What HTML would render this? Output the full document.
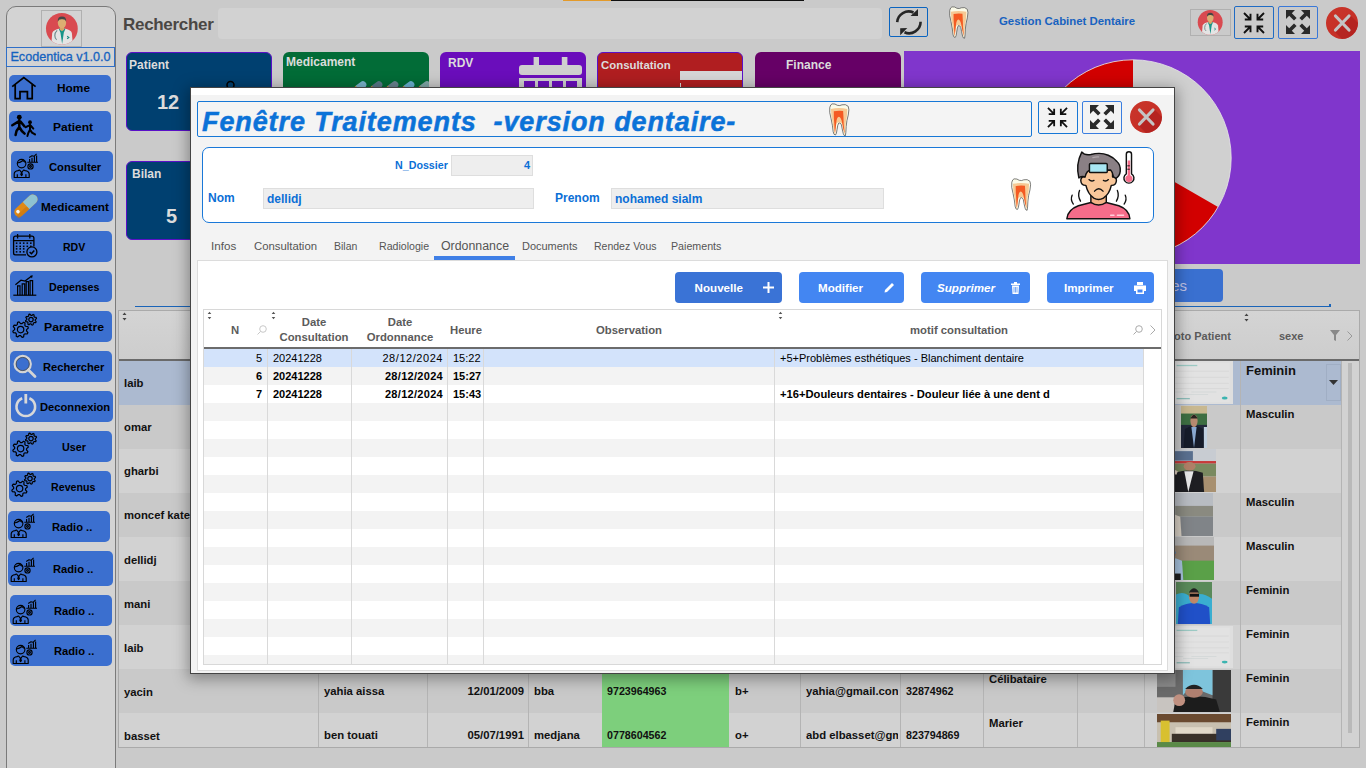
<!DOCTYPE html><html><head><meta charset="utf-8"><style>*{box-sizing:border-box;margin:0;padding:0}
html,body{width:1366px;height:768px;overflow:hidden}
body{background:#cacaca;font-family:"Liberation Sans",sans-serif;position:relative}
.a{position:absolute}
svg{display:block}
#side{left:6px;top:6px;width:110px;height:780px;background:#d3d3d3;border:1.5px solid #7a7a7a;border-radius:10px 10px 0 0}
.sb{position:absolute;background:#3b6fcf;border-radius:5px;color:#000;font-weight:bold;font-size:12px;white-space:nowrap}
.b{font-weight:bold}
.card{position:absolute;border-radius:6px;color:#dcdcdc;font-weight:bold;overflow:hidden}
.bgt{position:absolute;font-weight:bold;font-size:11.3px;color:#111;white-space:nowrap;line-height:14px}
.vl{position:absolute;width:1px;background:#b4b4b4}
.btn{position:absolute;top:272px;height:31px;border-radius:4px}
.hdr{position:absolute;font-weight:bold;font-size:11.3px;color:#5b5b5b;text-align:center;line-height:15px;white-space:nowrap}
.cell{position:absolute;font-size:11px;color:#000;white-space:nowrap;line-height:18px}
.gl{position:absolute;width:1px;background:#d9d9d9}
</style></head><body>
<div class="a" style="left:563px;top:0;width:48px;height:1px;background:#e39a2a"></div>
<div class="a" style="left:611px;top:0;width:193px;height:1px;background:#111"></div>
<div id="side" class="a"></div>
<div class="a" style="left:41px;top:10px;width:41px;height:37px;border:1px solid #b0b0b0;background:#d3d3d3"></div>
<svg class="a" style="left:40.0px;top:8.0px" width="44.0" height="40.0" viewBox="0 0 845 768">
<defs><clipPath id="cca"><circle cx="420" cy="400" r="305"/></clipPath></defs>
<circle cx="420" cy="400" r="305" fill="#d94a50"/>
<g clip-path="url(#cca)">
<path d="M215 720 L235 480 Q255 425 360 400 L490 400 Q595 425 612 480 L632 720 Z" fill="#e4e4e4"/>
<path d="M360 400 L490 400 L458 470 L425 690 L392 470 Z" fill="#189488"/>
<path d="M382 350 H462 V418 L422 445 L382 418Z" fill="#d6a468"/>
<ellipse cx="422" cy="282" rx="80" ry="108" fill="#dcae72"/>
<path d="M342 262 Q332 168 422 165 Q512 168 502 262 Q490 212 422 218 Q360 212 342 262Z" fill="#454545"/>
<path d="M330 430 Q285 470 285 530 Q285 590 320 610" fill="none" stroke="#6a8a8a" stroke-width="22"/>
<path d="M520 540 L555 565 L520 590" fill="none" stroke="#1a8a80" stroke-width="20"/>
</g></svg>
<div class="a" style="left:6px;top:47px;width:109px;height:20px;border:1px solid #2f6fc8;color:#1462c0;font-size:12.6px;line-height:19px;text-align:center;-webkit-text-stroke:0.3px #1462c0">Ecodentica v1.0.0</div>
<div class="sb" style="left:9px;top:75px;width:102px;height:27px">
<div class="a" style="left:0.0px;top:0.0px"><svg width="30" height="28" viewBox="0 0 30 28"><path d="M3.2 11.6 L14.8 2.5 L26.6 11.6 M6.2 9.3 V23.6 H11 V16.6 H18.4 V23.6 H23.2 V9.3" fill="none" stroke="#000" stroke-width="1.75" stroke-linejoin="miter"/></svg></div>
</div>
<div class="a b" style="left:56.6px;top:81.1px;font-size:11.5px;line-height:14px;white-space:nowrap;transform:scaleX(1.033);transform-origin:0 0">Home</div>
<div class="sb" style="left:9px;top:111px;width:102px;height:31px">
<div class="a" style="left:0.0px;top:0.0px"><svg width="30" height="28" viewBox="0 0 30 28"><g fill="#000"><circle cx="10.3" cy="6.2" r="2.4"/><circle cx="21" cy="11.2" r="1.9"/></g><g fill="none" stroke="#000" stroke-linecap="round" stroke-linejoin="round"><path d="M10.3 9 V16 M9.3 10.6 L3.3 14.3 M11.5 10.6 L15.4 15.3 M10.3 16 L7.5 20 L6.6 24 M10.3 16 L12.8 20 L15.6 22.6" stroke-width="2.5"/><path d="M21 13.6 V18.6 M20.4 14.3 L16.8 16.2 M21.6 14.5 L24.3 17.6 M21 18.6 L19.3 22 L18.4 25 M21 18.6 L23 21.6 L26 23.4" stroke-width="2"/></g></svg></div>
</div>
<div class="a b" style="left:53.0px;top:119.8px;font-size:11.5px;line-height:14px;white-space:nowrap;transform:scaleX(1.043);transform-origin:0 0">Patient</div>
<div class="sb" style="left:11px;top:151px;width:102px;height:31px">
<div class="a" style="left:0.0px;top:0.0px"><svg width="30" height="28" viewBox="0 0 30 28"><g fill="none" stroke="#000" stroke-width="1.15" stroke-linejoin="round"><circle cx="10.6" cy="12.6" r="4.3"/><path d="M6.5 12 Q9.5 11.5 12 9.5 Q13.5 11 14.8 11.5"/><path d="M3.2 26.5 V22.8 Q3.5 20 7 19.6 L8.6 19 L10.6 21.6 L12.6 19 L14.2 19.6 Q17.8 20 18.2 22.8 V26.5Z"/><path d="M10.6 21.6 L9.8 23.4 L10.6 24.6 L11.4 23.4Z"/><path d="M6.3 23.2 V26.5 M14.9 23.2 V26.5"/><circle cx="19.5" cy="15.4" r="2.6"/><circle cx="19.5" cy="15.4" r="0.9"/><path d="M16.3 11.2 H27 M18.6 11.2 V8 M21 11.2 V6.8 M23.4 11.2 V5.6 M25.6 11.2 V4.6 M18.2 6.4 L21 4.8 L23 5.3 L25.6 2.8"/></g></svg></div>
</div>
<div class="a b" style="left:48.6px;top:159.8px;font-size:11.5px;line-height:14px;white-space:nowrap;transform:scaleX(0.973);transform-origin:0 0">Consulter</div>
<div class="sb" style="left:11px;top:191px;width:102px;height:31px">
<div class="a" style="left:0.0px;top:0.0px"><svg width="30" height="30" viewBox="0 0 30 30"><g transform="rotate(-42.8 15.05 14.55)"><rect x="0.7" y="9.75" width="28.3" height="9.6" rx="4.8" fill="#e08a16"/><path d="M15.05 9.75 H24.2 A4.8 4.8 0 0 1 24.2 19.35 H15.05Z" fill="#8ec2d2"/><rect x="0.7" y="15.5" width="14.35" height="3.85" rx="1.9" fill="#c87410" opacity="0.6"/><circle cx="5" cy="13.5" r="1.8" fill="#f4f4f4"/></g></svg></div>
</div>
<div class="a b" style="left:41.0px;top:200.1px;font-size:11.5px;line-height:14px;white-space:nowrap;transform:scaleX(1.022);transform-origin:0 0">Medicament</div>
<div class="sb" style="left:10px;top:231px;width:102px;height:31px">
<div class="a" style="left:0.0px;top:0.0px"><svg width="30" height="28" viewBox="0 0 30 28"><g fill="none" stroke="#000" stroke-width="1.3"><path d="M16 23.9 H5.6 Q3.6 23.9 3.6 21.9 V7.1 Q3.6 5.1 5.6 5.1 H21.9 Q23.9 5.1 23.9 7.1 V15.5"/><path d="M3.6 9.7 H23.9 M7.6 3 V7.6 M19.8 3 V7.6"/><circle cx="21.9" cy="20.9" r="5" fill="#3b6fcf"/><path d="M19.6 21 L21.4 22.7 L24.3 19.4" stroke-width="1.5"/></g><g fill="#000"><rect x="5.8" y="11.4" width="1.6" height="1.5"/><rect x="9.4" y="11.4" width="1.6" height="1.5"/><rect x="12.9" y="11.4" width="1.6" height="1.5"/><rect x="16.5" y="11.4" width="1.6" height="1.5"/><rect x="20.0" y="11.4" width="1.6" height="1.5"/><rect x="5.8" y="14.6" width="1.6" height="1.5"/><rect x="9.4" y="14.6" width="1.6" height="1.5"/><rect x="12.9" y="14.6" width="1.6" height="1.5"/><rect x="16.5" y="14.6" width="1.6" height="1.5"/><rect x="20.0" y="14.6" width="1.6" height="1.5"/><rect x="5.8" y="17.1" width="1.6" height="1.5"/><rect x="9.4" y="17.1" width="1.6" height="1.5"/><rect x="12.9" y="17.1" width="1.6" height="1.5"/><rect x="5.8" y="20.1" width="1.6" height="1.5"/><rect x="9.4" y="20.1" width="1.6" height="1.5"/><rect x="12.9" y="20.1" width="1.6" height="1.5"/></g></svg></div>
</div>
<div class="a b" style="left:62.9px;top:239.8px;font-size:11.5px;line-height:14px;white-space:nowrap;transform:scaleX(0.918);transform-origin:0 0">RDV</div>
<div class="sb" style="left:10px;top:271px;width:102px;height:31px">
<div class="a" style="left:0.0px;top:0.0px"><svg width="30" height="28" viewBox="0 0 30 28"><g fill="none" stroke="#000" stroke-width="1.2"><path d="M3.3 24.2 H26.3"/><path d="M7.6 24.2 V14.8 H10 V24.2 M12.2 24.2 V12.8 H14.7 V24.2 M16.2 24.2 V10.7 H18.5 V24.2 M20.1 24.2 V9.6 H22.6 V24.2"/><path d="M5.4 13.8 L11 9.2 L15 10 L21.7 5.1"/></g><path d="M22.8 4.2 L19.8 4.9 L22 7.2Z" fill="#000"/></svg></div>
</div>
<div class="a b" style="left:48.8px;top:280.0px;font-size:11.5px;line-height:14px;white-space:nowrap;transform:scaleX(0.926);transform-origin:0 0">Depenses</div>
<div class="sb" style="left:10px;top:311px;width:102px;height:31px">
<div class="a" style="left:0.0px;top:0.0px"><svg width="30" height="30" viewBox="0 0 30 30"><path d="M16.49 19.77 L17.90 21.62 L17.17 22.99 L14.85 22.85 L13.94 23.59 L13.62 25.90 L12.14 26.35 L10.60 24.60 L9.43 24.49 L7.58 25.90 L6.21 25.17 L6.35 22.85 L5.61 21.94 L3.30 21.62 L2.85 20.14 L4.60 18.60 L4.71 17.43 L3.30 15.58 L4.03 14.21 L6.35 14.35 L7.26 13.61 L7.58 11.30 L9.06 10.85 L10.60 12.60 L11.77 12.71 L13.62 11.30 L14.99 12.03 L14.85 14.35 L15.59 15.26 L17.90 15.58 L18.35 17.06 L16.60 18.60Z" fill="none" stroke="#000" stroke-width="1.2" stroke-linejoin="round"/><circle cx="10.6" cy="18.6" r="3.2" fill="none" stroke="#000" stroke-width="1.2"/><path d="M25.17 9.43 L26.17 10.74 L25.66 11.71 L24.01 11.61 L23.36 12.14 L23.14 13.77 L22.09 14.09 L21.00 12.86 L20.17 12.77 L18.86 13.77 L17.89 13.26 L17.99 11.61 L17.46 10.96 L15.83 10.74 L15.51 9.69 L16.74 8.60 L16.83 7.77 L15.83 6.46 L16.34 5.49 L17.99 5.59 L18.64 5.06 L18.86 3.43 L19.91 3.11 L21.00 4.34 L21.83 4.43 L23.14 3.43 L24.11 3.94 L24.01 5.59 L24.54 6.24 L26.17 6.46 L26.49 7.51 L25.26 8.60Z" fill="none" stroke="#000" stroke-width="1.2" stroke-linejoin="round"/><circle cx="21.0" cy="8.6" r="2.2" fill="none" stroke="#000" stroke-width="1.2"/></svg></div>
</div>
<div class="a b" style="left:43.6px;top:319.8px;font-size:11.5px;line-height:14px;white-space:nowrap;transform:scaleX(1.066);transform-origin:0 0">Parametre</div>
<div class="sb" style="left:10px;top:351px;width:102px;height:31px">
<div class="a" style="left:0.0px;top:0.0px"><svg width="30" height="30" viewBox="0 0 30 30"><circle cx="12.7" cy="13" r="8" fill="none" stroke="#d4d4d4" stroke-width="2.4"/><circle cx="12.7" cy="13" r="6.6" fill="none" stroke="#444" stroke-width="0.8"/><path d="M18.5 19 L25 25.5" stroke="#d4d4d4" stroke-width="2.8" stroke-linecap="round"/></svg></div>
</div>
<div class="a b" style="left:42.7px;top:359.7px;font-size:11.5px;line-height:14px;white-space:nowrap;transform:scaleX(0.968);transform-origin:0 0">Rechercher</div>
<div class="sb" style="left:11px;top:391px;width:102px;height:31px">
<div class="a" style="left:0.0px;top:0.0px"><svg width="30" height="30" viewBox="0 0 30 30"><path d="M11.2 7.2 A9.3 9.3 0 1 0 18.4 7.2" fill="none" stroke="#d8d8d8" stroke-width="2.6"/><path d="M14.8 3 V12.5" stroke="#d8d8d8" stroke-width="2.8"/></svg></div>
</div>
<div class="a b" style="left:39.6px;top:399.8px;font-size:11.5px;line-height:14px;white-space:nowrap;transform:scaleX(0.972);transform-origin:0 0">Deconnexion</div>
<div class="sb" style="left:10px;top:431px;width:102px;height:31px">
<div class="a" style="left:0.0px;top:-1.0px"><svg width="30" height="30" viewBox="0 0 30 30"><path d="M16.49 19.77 L17.90 21.62 L17.17 22.99 L14.85 22.85 L13.94 23.59 L13.62 25.90 L12.14 26.35 L10.60 24.60 L9.43 24.49 L7.58 25.90 L6.21 25.17 L6.35 22.85 L5.61 21.94 L3.30 21.62 L2.85 20.14 L4.60 18.60 L4.71 17.43 L3.30 15.58 L4.03 14.21 L6.35 14.35 L7.26 13.61 L7.58 11.30 L9.06 10.85 L10.60 12.60 L11.77 12.71 L13.62 11.30 L14.99 12.03 L14.85 14.35 L15.59 15.26 L17.90 15.58 L18.35 17.06 L16.60 18.60Z" fill="none" stroke="#000" stroke-width="1.2" stroke-linejoin="round"/><circle cx="10.6" cy="18.6" r="3.2" fill="none" stroke="#000" stroke-width="1.2"/><path d="M25.17 9.43 L26.17 10.74 L25.66 11.71 L24.01 11.61 L23.36 12.14 L23.14 13.77 L22.09 14.09 L21.00 12.86 L20.17 12.77 L18.86 13.77 L17.89 13.26 L17.99 11.61 L17.46 10.96 L15.83 10.74 L15.51 9.69 L16.74 8.60 L16.83 7.77 L15.83 6.46 L16.34 5.49 L17.99 5.59 L18.64 5.06 L18.86 3.43 L19.91 3.11 L21.00 4.34 L21.83 4.43 L23.14 3.43 L24.11 3.94 L24.01 5.59 L24.54 6.24 L26.17 6.46 L26.49 7.51 L25.26 8.60Z" fill="none" stroke="#000" stroke-width="1.2" stroke-linejoin="round"/><circle cx="21.0" cy="8.6" r="2.2" fill="none" stroke="#000" stroke-width="1.2"/></svg></div>
</div>
<div class="a b" style="left:61.9px;top:439.7px;font-size:11.5px;line-height:14px;white-space:nowrap;transform:scaleX(0.938);transform-origin:0 0">User</div>
<div class="sb" style="left:9px;top:471px;width:102px;height:31px">
<div class="a" style="left:0.0px;top:-1.0px"><svg width="30" height="30" viewBox="0 0 30 30"><path d="M16.49 19.77 L17.90 21.62 L17.17 22.99 L14.85 22.85 L13.94 23.59 L13.62 25.90 L12.14 26.35 L10.60 24.60 L9.43 24.49 L7.58 25.90 L6.21 25.17 L6.35 22.85 L5.61 21.94 L3.30 21.62 L2.85 20.14 L4.60 18.60 L4.71 17.43 L3.30 15.58 L4.03 14.21 L6.35 14.35 L7.26 13.61 L7.58 11.30 L9.06 10.85 L10.60 12.60 L11.77 12.71 L13.62 11.30 L14.99 12.03 L14.85 14.35 L15.59 15.26 L17.90 15.58 L18.35 17.06 L16.60 18.60Z" fill="none" stroke="#000" stroke-width="1.2" stroke-linejoin="round"/><circle cx="10.6" cy="18.6" r="3.2" fill="none" stroke="#000" stroke-width="1.2"/><path d="M25.17 9.43 L26.17 10.74 L25.66 11.71 L24.01 11.61 L23.36 12.14 L23.14 13.77 L22.09 14.09 L21.00 12.86 L20.17 12.77 L18.86 13.77 L17.89 13.26 L17.99 11.61 L17.46 10.96 L15.83 10.74 L15.51 9.69 L16.74 8.60 L16.83 7.77 L15.83 6.46 L16.34 5.49 L17.99 5.59 L18.64 5.06 L18.86 3.43 L19.91 3.11 L21.00 4.34 L21.83 4.43 L23.14 3.43 L24.11 3.94 L24.01 5.59 L24.54 6.24 L26.17 6.46 L26.49 7.51 L25.26 8.60Z" fill="none" stroke="#000" stroke-width="1.2" stroke-linejoin="round"/><circle cx="21.0" cy="8.6" r="2.2" fill="none" stroke="#000" stroke-width="1.2"/></svg></div>
</div>
<div class="a b" style="left:50.8px;top:479.8px;font-size:11.5px;line-height:14px;white-space:nowrap;transform:scaleX(0.928);transform-origin:0 0">Revenus</div>
<div class="sb" style="left:8px;top:511px;width:102px;height:31px">
<div class="a" style="left:0.0px;top:0.0px"><svg width="30" height="28" viewBox="0 0 30 28"><g fill="none" stroke="#000" stroke-width="1.15" stroke-linejoin="round"><circle cx="10.6" cy="12.6" r="4.3"/><path d="M6.5 12 Q9.5 11.5 12 9.5 Q13.5 11 14.8 11.5"/><path d="M3.2 26.5 V22.8 Q3.5 20 7 19.6 L8.6 19 L10.6 21.6 L12.6 19 L14.2 19.6 Q17.8 20 18.2 22.8 V26.5Z"/><path d="M10.6 21.6 L9.8 23.4 L10.6 24.6 L11.4 23.4Z"/><path d="M6.3 23.2 V26.5 M14.9 23.2 V26.5"/><circle cx="19.5" cy="15.4" r="2.6"/><circle cx="19.5" cy="15.4" r="0.9"/><path d="M16.3 11.2 H27 M18.6 11.2 V8 M21 11.2 V6.8 M23.4 11.2 V5.6 M25.6 11.2 V4.6 M18.2 6.4 L21 4.8 L23 5.3 L25.6 2.8"/></g></svg></div>
</div>
<div class="a b" style="left:51.9px;top:520.0px;font-size:11.5px;line-height:14px;white-space:nowrap;transform:scaleX(0.970);transform-origin:0 0">Radio ..</div>
<div class="sb" style="left:8px;top:551px;width:105px;height:35px">
<div class="a" style="left:0.0px;top:3.5px"><svg width="30" height="28" viewBox="0 0 30 28"><g fill="none" stroke="#000" stroke-width="1.15" stroke-linejoin="round"><circle cx="10.6" cy="12.6" r="4.3"/><path d="M6.5 12 Q9.5 11.5 12 9.5 Q13.5 11 14.8 11.5"/><path d="M3.2 26.5 V22.8 Q3.5 20 7 19.6 L8.6 19 L10.6 21.6 L12.6 19 L14.2 19.6 Q17.8 20 18.2 22.8 V26.5Z"/><path d="M10.6 21.6 L9.8 23.4 L10.6 24.6 L11.4 23.4Z"/><path d="M6.3 23.2 V26.5 M14.9 23.2 V26.5"/><circle cx="19.5" cy="15.4" r="2.6"/><circle cx="19.5" cy="15.4" r="0.9"/><path d="M16.3 11.2 H27 M18.6 11.2 V8 M21 11.2 V6.8 M23.4 11.2 V5.6 M25.6 11.2 V4.6 M18.2 6.4 L21 4.8 L23 5.3 L25.6 2.8"/></g></svg></div>
</div>
<div class="a b" style="left:53.0px;top:562.1px;font-size:11.5px;line-height:14px;white-space:nowrap;transform:scaleX(0.970);transform-origin:0 0">Radio ..</div>
<div class="sb" style="left:10px;top:595px;width:102px;height:31px">
<div class="a" style="left:0.0px;top:1.5px"><svg width="30" height="28" viewBox="0 0 30 28"><g fill="none" stroke="#000" stroke-width="1.15" stroke-linejoin="round"><circle cx="10.6" cy="12.6" r="4.3"/><path d="M6.5 12 Q9.5 11.5 12 9.5 Q13.5 11 14.8 11.5"/><path d="M3.2 26.5 V22.8 Q3.5 20 7 19.6 L8.6 19 L10.6 21.6 L12.6 19 L14.2 19.6 Q17.8 20 18.2 22.8 V26.5Z"/><path d="M10.6 21.6 L9.8 23.4 L10.6 24.6 L11.4 23.4Z"/><path d="M6.3 23.2 V26.5 M14.9 23.2 V26.5"/><circle cx="19.5" cy="15.4" r="2.6"/><circle cx="19.5" cy="15.4" r="0.9"/><path d="M16.3 11.2 H27 M18.6 11.2 V8 M21 11.2 V6.8 M23.4 11.2 V5.6 M25.6 11.2 V4.6 M18.2 6.4 L21 4.8 L23 5.3 L25.6 2.8"/></g></svg></div>
</div>
<div class="a b" style="left:54.0px;top:603.8px;font-size:11.5px;line-height:14px;white-space:nowrap;transform:scaleX(0.970);transform-origin:0 0">Radio ..</div>
<div class="sb" style="left:10px;top:635px;width:102px;height:31px">
<div class="a" style="left:0.0px;top:1.5px"><svg width="30" height="28" viewBox="0 0 30 28"><g fill="none" stroke="#000" stroke-width="1.15" stroke-linejoin="round"><circle cx="10.6" cy="12.6" r="4.3"/><path d="M6.5 12 Q9.5 11.5 12 9.5 Q13.5 11 14.8 11.5"/><path d="M3.2 26.5 V22.8 Q3.5 20 7 19.6 L8.6 19 L10.6 21.6 L12.6 19 L14.2 19.6 Q17.8 20 18.2 22.8 V26.5Z"/><path d="M10.6 21.6 L9.8 23.4 L10.6 24.6 L11.4 23.4Z"/><path d="M6.3 23.2 V26.5 M14.9 23.2 V26.5"/><circle cx="19.5" cy="15.4" r="2.6"/><circle cx="19.5" cy="15.4" r="0.9"/><path d="M16.3 11.2 H27 M18.6 11.2 V8 M21 11.2 V6.8 M23.4 11.2 V5.6 M25.6 11.2 V4.6 M18.2 6.4 L21 4.8 L23 5.3 L25.6 2.8"/></g></svg></div>
</div>
<div class="a b" style="left:54.0px;top:643.8px;font-size:11.5px;line-height:14px;white-space:nowrap;transform:scaleX(0.970);transform-origin:0 0">Radio ..</div>
<div class="a b" style="left:123px;top:13.5px;font-size:17px;letter-spacing:-0.3px;color:#4a4744;line-height:22px">Rechercher</div>
<div class="a" style="left:218px;top:8px;width:664px;height:31px;background:#d2d2d2;border-radius:4px"></div>
<div class="a" style="left:889px;top:7px;width:39px;height:30px;border:1.3px solid #0a64c0;border-radius:2px"></div>
<svg class="a" style="left:889px;top:3px" width="40" height="40" viewBox="889 3 40 40"><g fill="none" stroke="#262626" stroke-width="2.6"><path d="M897.2 22.1 A11.5 11.5 0 0 1 913.5 12.5"/><path d="M920.6 21.8 A11.5 11.5 0 0 1 904.5 32.3"/></g><path d="M918 8.9 L918 15.9 L910.5 15.9Z" fill="#262626"/><path d="M900.2 35.3 L900.2 28.3 L907.3 28Z" fill="#262626"/></svg>
<svg class="a" style="left:949.2px;top:6.0px" width="19.8" height="33.0" viewBox="80 45 400 650" preserveAspectRatio="none"><path d="M140 62 Q200 55 240 90 Q290 105 330 80 Q400 60 450 110 Q475 160 450 280 Q420 380 410 500 Q405 640 395 680 Q370 690 355 640 Q330 540 320 470 Q300 420 270 430 Q245 460 235 560 Q225 650 205 665 Q170 670 160 600 Q150 480 120 350 Q80 220 95 130 Q110 70 140 62Z" fill="#fbfbe8" stroke="#4a4a4a" stroke-width="14"/><path d="M118 160 Q270 128 432 160 Q432 300 402 420 Q392 560 382 655 Q360 560 345 480 Q325 420 270 420 Q220 422 212 480 Q200 560 190 655 Q162 520 150 420 Q118 300 118 160Z" fill="#f6c994"/><path d="M172 205 Q270 185 352 200 Q362 350 362 450 Q372 560 380 635 Q352 560 332 430 Q312 320 270 312 Q228 322 220 430 Q210 540 196 635 Q182 520 182 450 Q170 330 172 205Z" fill="#f45a22"/></svg>
<div class="a b" style="left:999px;top:13px;font-size:11.4px;color:#1862c0;line-height:16px;white-space:nowrap">Gestion Cabinet Dentaire</div>
<div class="a" style="left:1190px;top:9px;width:41px;height:27px;border:1px solid #b0b0b0"></div>
<svg class="a" style="left:1193.4px;top:6.2px" width="34.6" height="31.4" viewBox="0 0 845 768">
<defs><clipPath id="ccb"><circle cx="420" cy="400" r="305"/></clipPath></defs>
<circle cx="420" cy="400" r="305" fill="#d94a50"/>
<g clip-path="url(#ccb)">
<path d="M215 720 L235 480 Q255 425 360 400 L490 400 Q595 425 612 480 L632 720 Z" fill="#e4e4e4"/>
<path d="M360 400 L490 400 L458 470 L425 690 L392 470 Z" fill="#189488"/>
<path d="M382 350 H462 V418 L422 445 L382 418Z" fill="#d6a468"/>
<ellipse cx="422" cy="282" rx="80" ry="108" fill="#dcae72"/>
<path d="M342 262 Q332 168 422 165 Q512 168 502 262 Q490 212 422 218 Q360 212 342 262Z" fill="#454545"/>
<path d="M330 430 Q285 470 285 530 Q285 590 320 610" fill="none" stroke="#6a8a8a" stroke-width="22"/>
<path d="M520 540 L555 565 L520 590" fill="none" stroke="#1a8a80" stroke-width="20"/>
</g></svg>
<div class="a" style="left:1234px;top:6px;width:40px;height:33px;border:1px solid #1f6bc4;border-radius:2px"></div>
<svg class="a" style="left:1243px;top:12px" width="22" height="22" viewBox="0 0 22 22"><g stroke="#111" stroke-width="1.9" fill="none"><path d="M1 1 L7.5 7.5 M1.8 7.5 H7.5 V1.8"/><path d="M21 1 L14.5 7.5 M20.2 7.5 H14.5 V1.8"/><path d="M1 21 L7.5 14.5 M1.8 14.5 H7.5 V20.2"/><path d="M21 21 L14.5 14.5 M20.2 14.5 H14.5 V20.2"/></g></svg>
<div class="a" style="left:1278px;top:6px;width:40px;height:33px;border:1px solid #3a78d8;border-radius:2px"></div>
<svg class="a" style="left:1286px;top:10px" width="24" height="24" viewBox="0 0 24 24"><g fill="#2a2a2a"><path id="ma" d="M0 0 H9 L5.8 3.2 L10.6 8 L8 10.6 L3.2 5.8 L0 9Z"/><path d="M0 0 H9 L5.8 3.2 L10.6 8 L8 10.6 L3.2 5.8 L0 9Z" transform="rotate(90 12 12)"/><path d="M0 0 H9 L5.8 3.2 L10.6 8 L8 10.6 L3.2 5.8 L0 9Z" transform="rotate(180 12 12)"/><path d="M0 0 H9 L5.8 3.2 L10.6 8 L8 10.6 L3.2 5.8 L0 9Z" transform="rotate(270 12 12)"/></g></svg>
<svg class="a" style="left:1326px;top:7px" width="32" height="32" viewBox="0 0 32 32"><defs><linearGradient id="cga" x1="0" y1="0" x2="1" y2="1"><stop offset="0" stop-color="#c9362b"/><stop offset="1" stop-color="#c42c24"/></linearGradient><clipPath id="cqa"><circle cx="16" cy="16" r="16"/></clipPath></defs><circle cx="16" cy="16" r="16" fill="url(#cga)"/><path d="M24 8 L40 24 L24 40 L8 24Z" fill="#a81c1c" opacity="0.55" clip-path="url(#cqa)"/><g stroke="#c4c4c4" stroke-width="3.2" stroke-linecap="round"><path d="M9.5 9 L23 23 M23 9 L9.5 23"/></g></svg>
<div class="card" style="left:126px;top:52px;width:146px;height:79px;background:#004070;border:1px solid #5a10c8;">
<div class="a" style="left:2px;top:5px;font-size:12px;line-height:14px">Patient</div>
<svg class="a" style="left:98px;top:27px" width="12" height="12"><circle cx="5.5" cy="5" r="3.5" fill="none" stroke="#000" stroke-width="1.6"/></svg>
<div class="a b" style="left:30px;top:37px;font-size:20px;color:#dcdcdc;line-height:24px">12</div></div>
<div class="card" style="left:283px;top:52px;width:146px;height:79px;background:#026c37;">
<div class="a" style="left:3px;top:3px;font-size:12px;line-height:14px">Medicament</div>
<div class="a" style="left:68px;top:28px;width:80px;height:12px"><div class="a" style="left:3px;top:3px;width:13px;height:7px;border-radius:3.5px;background:linear-gradient(90deg,#d08a2a 0,#d08a2a 18%,#7ab4cc 30%);transform:rotate(-38deg)"></div><div class="a" style="left:19px;top:3px;width:13px;height:7px;border-radius:3.5px;background:linear-gradient(90deg,#d08a2a 0,#d08a2a 18%,#5a7888 30%);transform:rotate(-38deg)"></div><div class="a" style="left:35px;top:3px;width:13px;height:7px;border-radius:3.5px;background:linear-gradient(90deg,#d08a2a 0,#d08a2a 18%,#6a8490 30%);transform:rotate(-38deg)"></div><div class="a" style="left:51px;top:3px;width:13px;height:7px;border-radius:3.5px;background:linear-gradient(90deg,#d08a2a 0,#d08a2a 18%,#6ab0d0 30%);transform:rotate(-38deg)"></div><div class="a" style="left:67px;top:3px;width:13px;height:7px;border-radius:3.5px;background:linear-gradient(90deg,#d08a2a 0,#d08a2a 18%,#80a8a8 30%);transform:rotate(-38deg)"></div></div></div>
<div class="card" style="left:440px;top:52px;width:146px;height:79px;background:#6a0dbb;">
<div class="a" style="left:8px;top:4px;font-size:12px;line-height:14px">RDV</div>
<svg class="a" style="left:79px;top:5px" width="63" height="80" viewBox="0 0 63 80"><g fill="#cfcfcf"><rect x="14.6" y="0" width="5.4" height="10"/><rect x="42.8" y="0" width="5.6" height="10"/><rect x="0" y="8" width="63" height="10" rx="3"/><rect x="0" y="21" width="63" height="60"/></g><g fill="#6a0dbb"><rect x="5" y="24" width="11" height="9"/><rect x="19" y="24" width="11" height="9"/><rect x="33" y="24" width="11" height="9"/><rect x="47" y="24" width="11" height="9"/></g></svg></div>
<div class="card" style="left:597px;top:52px;width:146px;height:79px;background:#b01e20;border:1px solid #5a10c8;">
<div class="a" style="left:3px;top:5px;font-size:12px;line-height:14px"><span style="font-size:11.4px">Consultation</span></div>
<div class="a" style="left:82px;top:18px;width:62px;height:9px;background:#d6d6d6"></div><div class="a" style="left:82px;top:30px;width:1px;height:40px;background:#d6d6d6"></div></div>
<div class="card" style="left:755px;top:52px;width:146px;height:79px;background:#660066;">
<div class="a" style="left:31px;top:6px;font-size:12px;line-height:14px">Finance</div>
</div>
<div class="card" style="left:126px;top:161px;width:146px;height:79px;background:#004070;border:1px solid #5a10c8;">
<div class="a" style="left:5px;top:5px;font-size:12px;line-height:14px">Bilan</div>
<div class="a b" style="left:39px;top:42px;font-size:20px;color:#dcdcdc;line-height:24px">5</div></div>
<div class="a" style="left:904px;top:51px;width:456px;height:213px;background:#8036cc;overflow:hidden">
<svg class="a" style="left:128.8px;top:6.5px" width="200" height="200" viewBox="-100 -100 200 200"><circle r="98.2" fill="#d0d0d0"/><path d="M0 0 L0 -98.2 A98.2 98.2 0 1 0 85.04 49.10Z" fill="#d20000"/><circle r="98.2" fill="none" stroke="#e8e8e8" stroke-width="0.8"/></svg>
</div>
<div class="a" style="left:1100px;top:269px;width:123px;height:33px;background:#3a70d0;border-radius:4px;color:#c0c4e8;font-size:15px;line-height:33px;text-align:right;padding-right:36px">Statistiques</div>
<div class="a" style="left:135px;top:305.5px;width:1195px;height:1.5px;background:#1a64b8"></div><div class="a" style="left:1329px;top:304px;width:1.5px;height:3px;background:#1a64b8"></div>
<div class="a" style="left:118px;top:310px;width:1242px;height:438px;border:1px solid #aaaaaa;background:#d2d2d2"></div>
<div class="a" style="left:119px;top:311px;width:1240px;height:48px;background:linear-gradient(#d4d4d4,#cdcdcd)"></div>
<div class="a" style="left:119px;top:359px;width:1240px;height:2px;background:#6a6a6a"></div>
<svg class="a" style="left:122px;top:312px" width="5" height="9" viewBox="0 0 5 9"><path d="M0.5 3 L2.5 0.5 L4.5 3Z M0.5 6 L2.5 8.5 L4.5 6Z" fill="#444"/></svg>
<svg class="a" style="left:1244px;top:313px" width="5" height="9" viewBox="0 0 5 9"><path d="M0.5 3 L2.5 0.5 L4.5 3Z M0.5 6 L2.5 8.5 L4.5 6Z" fill="#444"/></svg>
<div class="a b" style="left:1160px;top:328px;font-size:11px;color:#5b5b5b;white-space:nowrap;line-height:16px">Photo Patient</div>
<div class="a b" style="left:1279px;top:328px;font-size:11px;color:#5b5b5b;line-height:16px">sexe</div>
<svg class="a" style="left:1330px;top:330px" width="10" height="11" viewBox="0 0 10 11"><path d="M0 0 H10 L6 5 V11 L4 10 V5Z" fill="#888"/></svg>
<svg class="a" style="left:1347px;top:331px" width="6" height="10" viewBox="0 0 6 10"><path d="M0.5 0.5 L5 5 L0.5 9.5" fill="none" stroke="#999" stroke-width="1"/></svg>
<div class="a" style="left:119px;top:361px;width:1222px;height:44px;background:#acbad0"></div>
<div class="a" style="left:602px;top:361px;width:127px;height:44px;background:#7dcf7c"></div>
<div class="bgt" style="left:124px;top:376.0px">laib</div>
<div class="bgt" style="left:1246px;top:364px;font-size:13px">Feminin</div>
<div class="a" style="left:119px;top:405px;width:1222px;height:44px;background:#c9c9c9"></div>
<div class="a" style="left:602px;top:405px;width:127px;height:44px;background:#7dcf7c"></div>
<div class="bgt" style="left:124px;top:420.0px">omar</div>
<div class="bgt" style="left:1246px;top:407px;">Masculin</div>
<div class="a" style="left:119px;top:449px;width:1222px;height:44px;background:#d2d2d2"></div>
<div class="a" style="left:602px;top:449px;width:127px;height:44px;background:#7dcf7c"></div>
<div class="bgt" style="left:124px;top:464.0px">gharbi</div>
<div class="bgt" style="left:1246px;top:451px;"></div>
<div class="a" style="left:119px;top:493px;width:1222px;height:44px;background:#c9c9c9"></div>
<div class="a" style="left:602px;top:493px;width:127px;height:44px;background:#7dcf7c"></div>
<div class="bgt" style="left:124px;top:508.0px">moncef kateb</div>
<div class="bgt" style="left:1246px;top:495px;">Masculin</div>
<div class="a" style="left:119px;top:537px;width:1222px;height:44px;background:#d2d2d2"></div>
<div class="a" style="left:602px;top:537px;width:127px;height:44px;background:#7dcf7c"></div>
<div class="bgt" style="left:124px;top:552.6px">dellidj</div>
<div class="bgt" style="left:1246px;top:539px;">Masculin</div>
<div class="a" style="left:119px;top:581px;width:1222px;height:44px;background:#c9c9c9"></div>
<div class="a" style="left:602px;top:581px;width:127px;height:44px;background:#7dcf7c"></div>
<div class="bgt" style="left:124px;top:596.6px">mani</div>
<div class="bgt" style="left:1246px;top:583px;">Feminin</div>
<div class="a" style="left:119px;top:625px;width:1222px;height:44px;background:#d2d2d2"></div>
<div class="a" style="left:602px;top:625px;width:127px;height:44px;background:#7dcf7c"></div>
<div class="bgt" style="left:124px;top:640.6px">laib</div>
<div class="bgt" style="left:1246px;top:627px;">Feminin</div>
<div class="a" style="left:119px;top:669px;width:1222px;height:44px;background:#c9c9c9"></div>
<div class="a" style="left:602px;top:669px;width:127px;height:44px;background:#7dcf7c"></div>
<div class="bgt" style="left:124px;top:684.6px">yacin</div>
<div class="bgt" style="left:1246px;top:671px;">Feminin</div>
<div class="bgt" style="left:324px;top:684px">yahia aissa</div>
<div class="bgt" style="left:428px;width:96px;text-align:right;top:684px">12/01/2009</div>
<div class="bgt" style="left:534px;top:684px">bba</div>
<div class="bgt" style="left:607px;top:684px;font-size:10.7px">9723964963</div>
<div class="bgt" style="left:735px;top:684px">b+</div>
<div class="bgt" style="left:806px;top:684px;width:92px;overflow:hidden">yahia@gmail.con</div>
<div class="bgt" style="left:906px;top:684px;font-size:10.7px">32874962</div>
<div class="bgt" style="left:989px;top:672px">Célibataire</div>
<div class="a" style="left:119px;top:713px;width:1222px;height:34px;background:#d2d2d2"></div>
<div class="a" style="left:602px;top:713px;width:127px;height:34px;background:#7dcf7c"></div>
<div class="bgt" style="left:124px;top:728.6px">basset</div>
<div class="bgt" style="left:1246px;top:715px;">Feminin</div>
<div class="bgt" style="left:324px;top:728px">ben touati</div>
<div class="bgt" style="left:428px;width:96px;text-align:right;top:728px">05/07/1991</div>
<div class="bgt" style="left:534px;top:728px">medjana</div>
<div class="bgt" style="left:607px;top:728px;font-size:10.7px">0778604562</div>
<div class="bgt" style="left:735px;top:728px">o+</div>
<div class="bgt" style="left:806px;top:728px;width:92px;overflow:hidden">abd elbasset@gmail.com</div>
<div class="bgt" style="left:906px;top:728px;font-size:10.7px">823794869</div>
<div class="bgt" style="left:989px;top:716px">Marier</div>
<div class="vl" style="left:318px;top:361px;height:386px"></div>
<div class="vl" style="left:427px;top:361px;height:386px"></div>
<div class="vl" style="left:528px;top:361px;height:386px"></div>
<div class="vl" style="left:800px;top:361px;height:386px"></div>
<div class="vl" style="left:900px;top:361px;height:386px"></div>
<div class="vl" style="left:983px;top:361px;height:386px"></div>
<div class="vl" style="left:1077px;top:361px;height:386px"></div>
<div class="vl" style="left:1144px;top:361px;height:386px"></div>
<div class="vl" style="left:1240px;top:361px;height:386px"></div>
<div class="vl" style="left:1341px;top:361px;height:386px"></div>
<div class="a" style="left:1326px;top:364px;width:15px;height:37px;border:1px solid #a0aec4"></div>
<svg class="a" style="left:1329px;top:380px" width="9" height="5" viewBox="0 0 9 5"><path d="M0 0 H9 L4.5 5Z" fill="#333"/></svg>
<div class="a" style="left:1348px;top:363px;width:4px;height:370px;background:#b9b9b9"></div>
<svg class="a" style="left:1150px;top:361px" width="83" height="43" viewBox="0 0 100 100" preserveAspectRatio="none"><rect width="100" height="100" fill="#dedede"/><rect x="4" y="4" width="92" height="92" fill="#e2e2e2"/><rect x="32" y="9" width="25" height="3" fill="#9ccac4"/><path d="M5 24 H95 M5 38 H95 M5 52 H95 M5 64 H95" stroke="#d4d4d4" stroke-width="1"/><path d="M8 72 H40 M50 72 H80 M8 78 H30 M40 78 H70" stroke="#c8d0d0" stroke-width="1.5"/><rect x="32" y="86" width="16" height="3" fill="#8cbcb8"/><circle cx="90" cy="86" r="3.5" fill="#3cb4b0"/></svg>
<svg class="a" style="left:1181px;top:406px" width="26" height="42" viewBox="0 0 100 100" preserveAspectRatio="none"><rect width="100" height="100" fill="#3d6e42"/><rect width="100" height="18" fill="#c8b890"/><rect x="0" y="45" width="100" height="55" fill="#22283a"/><path d="M10 100 L15 55 Q50 40 85 55 L90 100Z" fill="#161c2a"/><path d="M40 50 L50 100 L60 50Z" fill="#8aa8d0"/><ellipse cx="50" cy="35" rx="14" ry="15" fill="#b88a70"/><path d="M36 30 Q50 12 64 30 Z" fill="#2a2420"/><rect x="88" y="50" width="12" height="50" fill="#c0d0e0"/></svg>
<svg class="a" style="left:1150px;top:449px" width="66" height="43" viewBox="0 0 100 100" preserveAspectRatio="none"><rect width="100" height="100" fill="#c8ccd2"/><rect x="30" y="5" width="35" height="22" fill="#5a7090"/><rect x="0" y="28" width="100" height="6" fill="#c83a3a"/><rect x="0" y="34" width="100" height="30" fill="#7a8a60"/><rect x="0" y="64" width="100" height="36" fill="#a89070"/><path d="M35 100 L38 55 Q60 45 80 55 L82 100Z" fill="#1e1e22"/><path d="M52 52 L58 100 L66 52Z" fill="#e8e8e8"/><ellipse cx="60" cy="40" rx="9" ry="10" fill="#b08068"/><path d="M20 50 L40 60 L42 52 L25 40Z" fill="#e0d0c0"/></svg>
<svg class="a" style="left:1150px;top:493px" width="63" height="43" viewBox="0 0 100 100" preserveAspectRatio="none"><rect width="100" height="100" fill="#b8bcc2"/><rect x="40" y="30" width="60" height="25" fill="#8a8a80"/><rect x="0" y="55" width="100" height="45" fill="#808488"/><path d="M8 100 L10 55 Q30 42 48 55 L50 100Z" fill="#d8d0c4"/><ellipse cx="29" cy="38" rx="10" ry="11" fill="#a07860"/><path d="M19 33 Q29 22 39 33Z" fill="#302820"/><rect x="12" y="0" width="5" height="30" fill="#505050"/></svg>
<svg class="a" style="left:1150px;top:537px" width="64" height="43" viewBox="0 0 100 100" preserveAspectRatio="none"><rect width="100" height="100" fill="#9a8a78"/><rect width="100" height="20" fill="#b8b8b8"/><rect x="0" y="55" width="100" height="45" fill="#5aa048"/><path d="M10 100 L12 55 Q32 42 50 55 L52 100Z" fill="#a8c4e0"/><rect x="14" y="85" width="34" height="15" fill="#202020"/><ellipse cx="31" cy="40" rx="9" ry="10" fill="#a07058"/><rect x="22" y="34" width="18" height="5" fill="#4080c0"/></svg>
<svg class="a" style="left:1176px;top:582px" width="36" height="42" viewBox="0 0 100 100" preserveAspectRatio="none"><rect width="100" height="100" fill="#3aaed0"/><path d="M0 0 H100 V40 Q70 20 40 35 Q20 20 0 30Z" fill="#5a8a5a"/><path d="M5 100 L8 60 Q50 40 92 60 L95 100Z" fill="#2050c8"/><ellipse cx="50" cy="35" rx="14" ry="17" fill="#c08868"/><path d="M36 25 Q50 5 64 25Z" fill="#222"/><rect x="38" y="28" width="26" height="7" fill="#111"/></svg>
<svg class="a" style="left:1150px;top:626px" width="83" height="42" viewBox="0 0 100 100" preserveAspectRatio="none"><rect width="100" height="100" fill="#dedede"/><rect x="4" y="4" width="92" height="92" fill="#e2e2e2"/><rect x="32" y="9" width="25" height="3" fill="#9ccac4"/><path d="M5 24 H95 M5 38 H95 M5 52 H95 M5 64 H95" stroke="#d4d4d4" stroke-width="1"/><path d="M8 72 H40 M50 72 H80 M8 78 H30 M40 78 H70" stroke="#c8d0d0" stroke-width="1.5"/><rect x="32" y="86" width="16" height="3" fill="#8cbcb8"/><circle cx="90" cy="86" r="3.5" fill="#3cb4b0"/></svg>
<svg class="a" style="left:1157px;top:670px" width="74" height="42" viewBox="0 0 100 100" preserveAspectRatio="none"><rect width="100" height="100" fill="#6a6a6a"/><rect x="0" y="0" width="25" height="40" fill="#8a8a8a"/><rect x="0" y="65" width="30" height="35" fill="#c8c4c0"/><rect x="75" y="0" width="25" height="100" fill="#3a3a3a"/><path d="M35 0 H75 V60 L60 50 H40 L35 60Z" fill="#7ec4dc"/><path d="M22 100 L25 70 Q50 55 80 70 L85 100Z" fill="#1c1c1c"/><ellipse cx="50" cy="52" rx="12" ry="14" fill="#b08070"/><path d="M38 45 Q50 25 62 45Z" fill="#222"/><ellipse cx="30" cy="72" rx="8" ry="14" fill="#c09080"/></svg>
<svg class="a" style="left:1157px;top:714px" width="74" height="33" viewBox="0 0 100 100" preserveAspectRatio="none"><rect width="100" height="100" fill="#6a4a30"/><rect x="0" y="25" width="100" height="75" fill="#c8c0b0"/><rect x="5" y="20" width="12" height="70" fill="#d8c030"/><rect x="25" y="40" width="50" height="20" fill="#e0d8c8"/><rect x="20" y="60" width="80" height="25" fill="#383028"/><rect x="0" y="85" width="100" height="15" fill="#5a8a48"/><rect x="80" y="45" width="20" height="35" fill="#304060"/></svg>
<div class="a" style="left:190px;top:87px;width:985px;height:587px;box-shadow:0 3px 14px 2px rgba(0,0,0,.35)"></div>
<div class="a" style="left:190px;top:87px;width:985px;height:587px;background:#f3f3f3;border:1px solid #444"></div>
<div class="a" style="left:191px;top:88px;width:983px;height:7px;background:#ffffff"></div>
<div class="a" style="left:197px;top:101px;width:835px;height:36px;border:1px solid #1677d6;border-radius:2px;background:#f4f4f4"></div>
<div class="a b" style="left:202px;top:105.5px;font-size:27px;font-style:italic;letter-spacing:0.9px;color:#0b72d8;-webkit-text-stroke:0.5px #0b72d8;line-height:32px;white-space:pre">Fenêtre Traitements  -version dentaire-</div>
<svg class="a" style="left:829.2px;top:102.5px" width="20.8" height="33.5" viewBox="80 45 400 650" preserveAspectRatio="none"><path d="M140 62 Q200 55 240 90 Q290 105 330 80 Q400 60 450 110 Q475 160 450 280 Q420 380 410 500 Q405 640 395 680 Q370 690 355 640 Q330 540 320 470 Q300 420 270 430 Q245 460 235 560 Q225 650 205 665 Q170 670 160 600 Q150 480 120 350 Q80 220 95 130 Q110 70 140 62Z" fill="#fbfbe8" stroke="#4a4a4a" stroke-width="14"/><path d="M118 160 Q270 128 432 160 Q432 300 402 420 Q392 560 382 655 Q360 560 345 480 Q325 420 270 420 Q220 422 212 480 Q200 560 190 655 Q162 520 150 420 Q118 300 118 160Z" fill="#f6c994"/><path d="M172 205 Q270 185 352 200 Q362 350 362 450 Q372 560 380 635 Q352 560 332 430 Q312 320 270 312 Q228 322 220 430 Q210 540 196 635 Q182 520 182 450 Q170 330 172 205Z" fill="#f45a22"/></svg>
<div class="a" style="left:1038px;top:101px;width:40px;height:33px;border:1px solid #1677d6;border-radius:2px"></div>
<svg class="a" style="left:1047px;top:107px" width="21" height="21" viewBox="0 0 22 22"><g stroke="#111" stroke-width="1.9" fill="none"><path d="M1 1 L7.5 7.5 M1.8 7.5 H7.5 V1.8"/><path d="M21 1 L14.5 7.5 M20.2 7.5 H14.5 V1.8"/><path d="M1 21 L7.5 14.5 M1.8 14.5 H7.5 V20.2"/><path d="M21 21 L14.5 14.5 M20.2 14.5 H14.5 V20.2"/></g></svg>
<div class="a" style="left:1082px;top:101px;width:40px;height:33px;border:1px solid #3a7ee0;border-radius:2px"></div>
<svg class="a" style="left:1090px;top:105px" width="24" height="24" viewBox="0 0 24 24"><g fill="#2a2a2a"><path id="ma" d="M0 0 H9 L5.8 3.2 L10.6 8 L8 10.6 L3.2 5.8 L0 9Z"/><path d="M0 0 H9 L5.8 3.2 L10.6 8 L8 10.6 L3.2 5.8 L0 9Z" transform="rotate(90 12 12)"/><path d="M0 0 H9 L5.8 3.2 L10.6 8 L8 10.6 L3.2 5.8 L0 9Z" transform="rotate(180 12 12)"/><path d="M0 0 H9 L5.8 3.2 L10.6 8 L8 10.6 L3.2 5.8 L0 9Z" transform="rotate(270 12 12)"/></g></svg>
<svg class="a" style="left:1130px;top:101px" width="32" height="32" viewBox="0 0 32 32"><defs><linearGradient id="cgc" x1="0" y1="0" x2="1" y2="1"><stop offset="0" stop-color="#c9362b"/><stop offset="1" stop-color="#c42c24"/></linearGradient><clipPath id="cqc"><circle cx="16" cy="16" r="16"/></clipPath></defs><circle cx="16" cy="16" r="16" fill="url(#cgc)"/><path d="M24 8 L40 24 L24 40 L8 24Z" fill="#a81c1c" opacity="0.55" clip-path="url(#cqc)"/><g stroke="#c4c4c4" stroke-width="3.2" stroke-linecap="round"><path d="M9.5 9 L23 23 M23 9 L9.5 23"/></g></svg>
<div class="a" style="left:202px;top:147px;width:952px;height:76px;border:1px solid #1a78d8;border-radius:7px;background:#fff"></div>
<div class="a b" style="left:395px;top:159px;font-size:10.7px;color:#0b6fd6;line-height:13px">N_Dossier</div>
<div class="a" style="left:451px;top:155px;width:82px;height:21px;background:#eeeeee;border:1px solid #dedede"></div>
<div class="a b" style="left:451px;top:158px;width:79px;text-align:right;font-size:11px;color:#0b6fd6;line-height:14px">4</div>
<div class="a b" style="left:208px;top:192px;font-size:12px;color:#0b6fd6;line-height:13px">Nom</div>
<div class="a" style="left:263px;top:188px;width:271px;height:21px;background:#eeeeee;border:1px solid #dedede"></div>
<div class="a b" style="left:267px;top:192px;font-size:12px;color:#0b6fd6;line-height:14px">dellidj</div>
<div class="a b" style="left:555px;top:192px;font-size:12px;color:#0b6fd6;line-height:13px">Prenom</div>
<div class="a" style="left:611px;top:188px;width:273px;height:21px;background:#eeeeee;border:1px solid #dedede"></div>
<div class="a b" style="left:615px;top:192px;font-size:12px;color:#0b6fd6;line-height:14px">nohamed sialm</div>
<svg class="a" style="left:1011.0px;top:178.0px" width="20.5" height="33.0" viewBox="80 45 400 650" preserveAspectRatio="none"><path d="M140 62 Q200 55 240 90 Q290 105 330 80 Q400 60 450 110 Q475 160 450 280 Q420 380 410 500 Q405 640 395 680 Q370 690 355 640 Q330 540 320 470 Q300 420 270 430 Q245 460 235 560 Q225 650 205 665 Q170 670 160 600 Q150 480 120 350 Q80 220 95 130 Q110 70 140 62Z" fill="#fbfbe8" stroke="#4a4a4a" stroke-width="14"/><path d="M118 160 Q270 128 432 160 Q432 300 402 420 Q392 560 382 655 Q360 560 345 480 Q325 420 270 420 Q220 422 212 480 Q200 560 190 655 Q162 520 150 420 Q118 300 118 160Z" fill="#f6c994"/><path d="M172 205 Q270 185 352 200 Q362 350 362 450 Q372 560 380 635 Q352 560 332 430 Q312 320 270 312 Q228 322 220 430 Q210 540 196 635 Q182 520 182 450 Q170 330 172 205Z" fill="#f45a22"/></svg>
<svg class="a" style="left:1062px;top:148px" width="78" height="74" viewBox="0 0 810 768">
<g stroke="#111" stroke-width="15" stroke-linejoin="round" stroke-linecap="round">
<path d="M50 735 Q60 640 170 600 L300 565 L460 565 L590 600 Q700 640 705 735 Z" fill="#f56d8a"/>
<path d="M300 480 V565 Q380 620 460 565 V480Z" fill="#f3b386"/>
<path d="M235 230 L235 300 Q195 295 195 340 Q200 390 248 388 Q270 480 330 520 Q380 548 430 520 Q492 480 512 388 Q560 390 565 340 Q565 295 525 300 L525 230 Z" fill="#f9c79a"/>
<path d="M175 310 Q140 170 205 42 Q235 80 300 68 Q400 40 480 75 Q540 100 570 140 Q610 175 605 240 Q600 290 560 315 L535 300 Q528 250 505 228 L300 228 Q255 232 240 300 Q205 290 175 310Z" fill="#8a8085"/>
<rect x="285" y="160" width="185" height="95" rx="12" fill="#a8e6f2"/>
<path d="M668 65 A27 27 0 0 1 722 65 V268 A52 52 0 1 1 668 268 Z" fill="#fff"/>
</g>
<path d="M682 130 V282 A38 38 0 1 0 708 282 V130Z" fill="#f56d8a"/>
<g fill="none" stroke="#111" stroke-width="14" stroke-linecap="round">
<path d="M280 328 Q305 352 332 336"/><path d="M430 336 Q457 352 482 328"/>
<path d="M338 448 Q382 398 426 448"/>
<path d="M105 490 Q85 535 118 582"/><path d="M182 440 Q160 492 192 552"/>
<path d="M575 440 Q597 492 565 552"/><path d="M657 490 Q677 535 645 582"/>
<path d="M682 185 H700 M682 220 H700" stroke-width="10"/>
</g>
<path d="M505 698 H540 M575 698 H640" stroke="#ffd0dc" stroke-width="14" stroke-linecap="round"/>
<path d="M320 100 Q350 90 380 92" stroke="#b0a8ac" stroke-width="12" stroke-linecap="round" fill="none"/>
</svg>
<div class="a" style="left:210.9px;top:239px;font-size:11px;color:#555;line-height:14px;white-space:nowrap;transform:scaleX(1.056);transform-origin:0 0">Infos</div>
<div class="a" style="left:253.6px;top:239px;font-size:11px;color:#555;line-height:14px;white-space:nowrap;transform:scaleX(1.030);transform-origin:0 0">Consultation</div>
<div class="a" style="left:333.7px;top:239px;font-size:11px;color:#555;line-height:14px;white-space:nowrap;transform:scaleX(0.952);transform-origin:0 0">Bilan</div>
<div class="a" style="left:378.7px;top:239px;font-size:11px;color:#555;line-height:14px;white-space:nowrap;transform:scaleX(0.964);transform-origin:0 0">Radiologie</div>
<div class="a" style="left:440.8px;top:239px;font-size:12px;color:#555;line-height:14px;white-space:nowrap;transform:scaleX(1.030);transform-origin:0 0">Ordonnance</div>
<div class="a" style="left:521.6px;top:239px;font-size:11px;color:#555;line-height:14px;white-space:nowrap;transform:scaleX(0.997);transform-origin:0 0">Documents</div>
<div class="a" style="left:593.7px;top:239px;font-size:11px;color:#555;line-height:14px;white-space:nowrap;transform:scaleX(0.955);transform-origin:0 0">Rendez Vous</div>
<div class="a" style="left:670.6px;top:239px;font-size:11px;color:#555;line-height:14px;white-space:nowrap;transform:scaleX(0.970);transform-origin:0 0">Paiements</div>
<div class="a" style="left:434px;top:256px;width:81px;height:4px;background:#3f7fe6"></div>
<div class="a" style="left:197px;top:260px;width:971px;height:411px;background:#fff;border:1px solid #dcdcdc"></div>
<div class="btn" style="left:675px;width:107px;background:#3a73d6"></div>
<div class="btn" style="left:799px;width:105px;background:#4386f2"></div>
<div class="btn" style="left:921px;width:109px;background:#4386f2"></div>
<div class="btn" style="left:1047px;width:107px;background:#4386f2"></div>
<div class="a b" style="left:694.6px;top:281px;font-size:11.6px;color:#fff;line-height:14px;">Nouvelle</div>
<div class="a" style="left:763px;top:282px"><svg width="11" height="11" viewBox="0 0 11 11"><path d="M5.5 0 V11 M0 5.5 H11" stroke="#fff" stroke-width="2"/></svg></div>
<div class="a b" style="left:818.0px;top:281px;font-size:11.6px;color:#fff;line-height:14px;">Modifier</div>
<div class="a" style="left:884px;top:282px"><svg width="11" height="11" viewBox="0 0 11 11"><path d="M0.5 10.5 L1 8 L8 1 L10 3 L3 10Z" fill="#fff"/></svg></div>
<div class="a b" style="left:937.0px;top:281px;font-size:11.6px;color:#fff;line-height:14px;font-style:italic;">Supprimer</div>
<div class="a" style="left:1011px;top:282px"><svg width="9" height="12" viewBox="0 0 9 12"><path d="M0 1.5 H9 V3 H0Z M3 0 H6 V1.5 H3Z M1 3.5 H8 L7.5 12 H1.5Z" fill="#fff"/><path d="M3 5 V10.5 M4.5 5 V10.5 M6 5 V10.5" stroke="#4386f2" stroke-width="0.7"/></svg></div>
<div class="a b" style="left:1064.0px;top:281px;font-size:11.6px;color:#fff;line-height:14px;">Imprimer</div>
<div class="a" style="left:1134px;top:282px"><svg width="12" height="12" viewBox="0 0 12 12"><path d="M3 0 H9 V3 H3Z M0 3.5 H12 V9 H10 V12 H2 V9 H0Z" fill="#fff"/><path d="M3.5 7.5 H8.5 V10.5 H3.5Z" fill="#4386f2"/></svg></div>
<div class="a" style="left:203px;top:309px;width:959px;height:356px;border:1px solid #d8d8d8;background:#fff"></div>
<div class="a" style="left:204px;top:347px;width:957px;height:2px;background:#6c6c6c"></div>
<div class="a" style="left:204px;top:349px;width:939px;height:18px;background:#d3e3fb"></div>
<div class="a" style="left:204px;top:367px;width:939px;height:18px;background:#f3f3f3"></div>
<div class="a" style="left:204px;top:385px;width:939px;height:18px;background:#ffffff"></div>
<div class="a" style="left:204px;top:403px;width:939px;height:18px;background:#f3f3f3"></div>
<div class="a" style="left:204px;top:421px;width:939px;height:18px;background:#ffffff"></div>
<div class="a" style="left:204px;top:439px;width:939px;height:18px;background:#f3f3f3"></div>
<div class="a" style="left:204px;top:457px;width:939px;height:18px;background:#ffffff"></div>
<div class="a" style="left:204px;top:475px;width:939px;height:18px;background:#f3f3f3"></div>
<div class="a" style="left:204px;top:493px;width:939px;height:18px;background:#ffffff"></div>
<div class="a" style="left:204px;top:511px;width:939px;height:18px;background:#f3f3f3"></div>
<div class="a" style="left:204px;top:529px;width:939px;height:18px;background:#ffffff"></div>
<div class="a" style="left:204px;top:547px;width:939px;height:18px;background:#f3f3f3"></div>
<div class="a" style="left:204px;top:565px;width:939px;height:18px;background:#ffffff"></div>
<div class="a" style="left:204px;top:583px;width:939px;height:18px;background:#f3f3f3"></div>
<div class="a" style="left:204px;top:601px;width:939px;height:18px;background:#ffffff"></div>
<div class="a" style="left:204px;top:619px;width:939px;height:18px;background:#f3f3f3"></div>
<div class="a" style="left:204px;top:637px;width:939px;height:18px;background:#ffffff"></div>
<div class="a" style="left:204px;top:655px;width:939px;height:9px;background:#f3f3f3"></div>
<div class="gl" style="left:267px;top:349px;height:315px"></div>
<div class="gl" style="left:351px;top:349px;height:315px"></div>
<div class="gl" style="left:447px;top:349px;height:315px"></div>
<div class="gl" style="left:483px;top:349px;height:315px"></div>
<div class="gl" style="left:774px;top:349px;height:315px"></div>
<div class="gl" style="left:1143px;top:349px;height:315px"></div>
<svg class="a" style="left:207px;top:311px" width="5" height="9" viewBox="0 0 5 9"><path d="M0.7 3 L2.5 0.8 L4.3 3Z M0.7 6 L2.5 8.2 L4.3 6Z" fill="#555"/></svg>
<svg class="a" style="left:271px;top:311px" width="5" height="9" viewBox="0 0 5 9"><path d="M0.7 3 L2.5 0.8 L4.3 3Z M0.7 6 L2.5 8.2 L4.3 6Z" fill="#555"/></svg>
<svg class="a" style="left:778px;top:311px" width="5" height="9" viewBox="0 0 5 9"><path d="M0.7 3 L2.5 0.8 L4.3 3Z M0.7 6 L2.5 8.2 L4.3 6Z" fill="#555"/></svg>
<svg class="a" style="left:257px;top:325px" width="10" height="10" viewBox="0 0 10 10"><circle cx="6" cy="4" r="3.3" fill="none" stroke="#c8c8c8" stroke-width="1"/><path d="M3.6 6.4 L0.5 9.5" stroke="#c8c8c8" stroke-width="1"/></svg>
<svg class="a" style="left:1133px;top:325px" width="10" height="10" viewBox="0 0 10 10"><circle cx="6" cy="4" r="3.3" fill="none" stroke="#aaa" stroke-width="1"/><path d="M3.6 6.4 L0.5 9.5" stroke="#aaa" stroke-width="1"/></svg>
<svg class="a" style="left:1150px;top:325px" width="6" height="10" viewBox="0 0 6 10"><path d="M0.5 0.5 L5 5 L0.5 9.5" fill="none" stroke="#aaa" stroke-width="1"/></svg>
<div class="hdr" style="left:225px;width:20px;top:323px">N</div>
<div class="hdr" style="left:272px;width:84px;top:315px">Date<br>Consultation</div>
<div class="hdr" style="left:352px;width:96px;top:315px">Date<br>Ordonnance</div>
<div class="hdr" style="left:448px;width:36px;top:323px">Heure</div>
<div class="hdr" style="left:483px;width:292px;top:323px">Observation</div>
<div class="hdr" style="left:775px;width:368px;top:323px">motif consultation</div>
<div class="cell" style="left:204px;width:58px;text-align:right;top:349px;">5</div>
<div class="cell" style="left:273px;top:349px;">20241228</div>
<div class="cell" style="left:352px;width:91px;text-align:right;top:349px;letter-spacing:0.55px;">28/12/2024</div>
<div class="cell" style="left:453px;top:349px;">15:22</div>
<div class="cell" style="left:780px;top:349px;">+5+Problèmes esthétiques - Blanchiment dentaire</div>
<div class="cell" style="left:204px;width:58px;text-align:right;top:367px;font-weight:bold;">6</div>
<div class="cell" style="left:273px;top:367px;font-weight:bold;">20241228</div>
<div class="cell" style="left:352px;width:91px;text-align:right;top:367px;font-weight:bold;letter-spacing:0.3px;">28/12/2024</div>
<div class="cell" style="left:453px;top:367px;font-weight:bold;">15:27</div>
<div class="cell" style="left:780px;top:367px;font-weight:bold;font-size:11.2px;"></div>
<div class="cell" style="left:204px;width:58px;text-align:right;top:385px;font-weight:bold;">7</div>
<div class="cell" style="left:273px;top:385px;font-weight:bold;">20241228</div>
<div class="cell" style="left:352px;width:91px;text-align:right;top:385px;font-weight:bold;letter-spacing:0.3px;">28/12/2024</div>
<div class="cell" style="left:453px;top:385px;font-weight:bold;">15:43</div>
<div class="cell" style="left:780px;top:385px;font-weight:bold;font-size:11.2px;">+16+Douleurs dentaires - Douleur liée à une dent d</div>
</body></html>
